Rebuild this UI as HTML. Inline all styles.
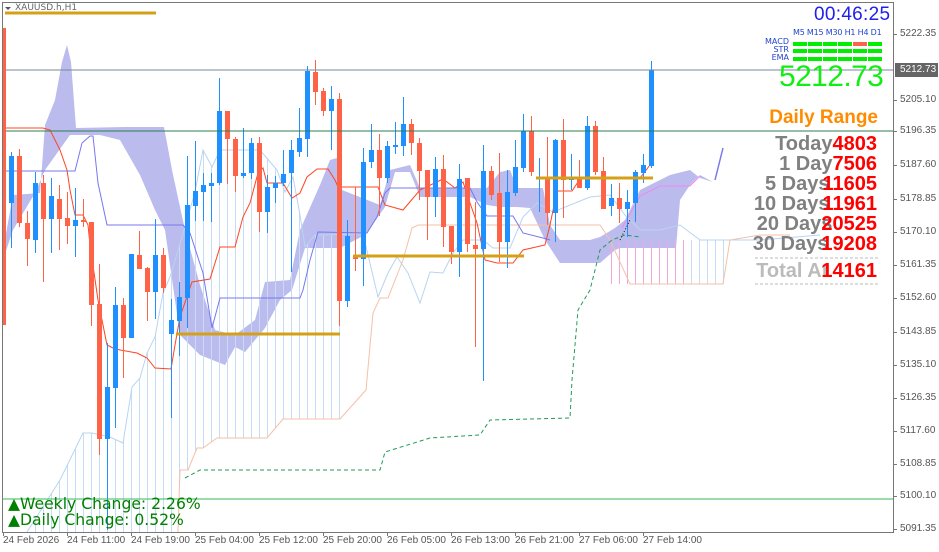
<!DOCTYPE html>
<html><head><meta charset="utf-8"><style>
html,body{margin:0;padding:0;background:#fff;}
#w{position:relative;width:939px;height:552px;overflow:hidden;background:#fff;font-family:"Liberation Sans",sans-serif;}
svg{position:absolute;left:0;top:0;}
.t{position:absolute;white-space:nowrap;}
.pl{position:absolute;left:900px;font-size:10px;color:#555;font-family:"Liberation Sans",sans-serif;letter-spacing:0px;}
.tl{position:absolute;top:535px;font-size:10px;color:#555;font-family:"Liberation Sans",sans-serif;letter-spacing:0px;}
.rw{position:absolute;right:62px;font-size:20px;font-weight:bold;white-space:nowrap;line-height:20px;}
.rw .g{color:#808080;} .rw .r{color:#ff0000;}
</style></head><body><div id="w">
<svg id="s" width="939" height="552" xmlns="http://www.w3.org/2000/svg">
<polygon fill="#bbbbee" points="3,250 13,195 40,193 45,125 55,100 62,62 67,45 71,62 76,128 125,127 164,127 172,170 185,230 200,285 215,330 235,335 255,320 265,282 290,280 300,230 320,185 330,160 337,158 342,190 380,205 390,170 410,165 420,188 487,188 500,172 510,170 517,188 543,188 550,225 560,240 590,240 600,237 615,228 625,220 640,190 670,175 690,170 700,178 713,182 700,175 690,185 680,200 676,248 620,248 615,250 600,263 560,263 545,240 530,208 517,207 500,207 487,205 470,197 420,197 410,172 395,172 385,207 365,235 340,248 305,248 292,290 280,300 265,328 255,340 245,352 235,347 225,365 200,355 180,335 165,230 155,210 140,175 120,140 100,135 70,135 45,170 35,193 13,230 3,260"/>
<g id="hatch" stroke="#c4dcf4" stroke-width="1"></g>
<polyline fill="none" stroke="#b8d4f0" stroke-width="1" points="27,532 60,480 83,433 92,433 110,437 123,443 132,387 140,378 147,353 155,337 163,293 170,277 187,220 195,192 203,150 212,167 220,150 260,150 277,170 285,192 293,177 300,215 305,247 315,235 363,234 378,297 388,273 397,257 408,273 420,303 430,272 443,273 453,253 463,240 483,240 493,248 510,248 523,217 537,203 553,212 590,197 610,195 625,215 640,230 660,230 680,225 700,240 760,240 820,235"/>
<polyline fill="none" stroke="#f4c0a8" stroke-width="1" points="178,532 180,470 188,470 197,448 203,448 217,438 267,438 283,419 340,419 366,390 373,313 380,298 388,298 403,260 412,228 418,225 600,225 610,240 630,284 723,284 730,240 760,235 790,235"/>
<polyline fill="none" stroke="#ff4422" stroke-width="1" points="3,128 43,128 50,130 60,150 67,170 70,190 75,215 83,215 88,225 90,245 98,300 107,345 113,348 120,350 137,353 147,358 155,368 171,369 175,345 180,317 192,282 210,279 220,247 235,247 243,217 250,203 258,173 263,168 267,183 283,183 292,198 300,193 307,177 317,169 328,169 335,180 338,187 378,187 385,205 403,210 420,190 443,179 455,188 463,182 470,203 477,223 485,260 497,263 513,263 523,250 545,245 550,225 557,191 572,191 580,179 590,178 640,178 650,165"/>
<polyline fill="none" stroke="#7777ee" stroke-width="1" points="3,171 75,171 82,143 90,136 93,136 98,183 107,225 183,225 190,233 203,273 212,328 220,298 300,298 303,290 310,260 318,232 367,233 377,217 385,193 390,188 470,188 477,202 487,216 513,216 523,233 543,238 550,240"/>
<polyline fill="none" stroke="#ee88ee" stroke-width="1" points="622,228 640,196 660,186 690,186 700,176"/>
<polyline fill="none" stroke="#22995a" stroke-width="1" stroke-dasharray="4,3" points="185,478 200,470 380,470 385,452 430,438 480,435 490,420 570,418 572,380 578,310 590,290 600,250 612,240 625,235 640,237"/>
<g id="c"></g>
<line x1="3" y1="70" x2="893" y2="70" stroke="#778899" stroke-width="1"/>
<line x1="3" y1="131" x2="893" y2="131" stroke="#2e7d50" stroke-width="1"/>
<line x1="3" y1="499" x2="893" y2="499" stroke="#33bb55" stroke-width="1"/>
<rect x="3" y="28" width="3" height="297" fill="#ff6347"/>
<g stroke="#d4a017" stroke-width="3">
<line x1="5" y1="13" x2="156" y2="13"/>
<line x1="176" y1="334" x2="340" y2="334"/>
<line x1="353" y1="256" x2="524" y2="256"/>
<line x1="536" y1="178" x2="653" y2="178"/>
</g>
<line x1="620" y1="240" x2="630" y2="220" stroke="#111" stroke-dasharray="1,2"/>
<line x1="715" y1="180" x2="723" y2="148" stroke="#7777ee" stroke-width="1.5"/>
<rect x="2.5" y="2.5" width="891" height="530" fill="none" stroke="#777" stroke-width="1"/>
<g id="ticks" stroke="#777"></g>
<rect x="895" y="63" width="43" height="14" fill="#666"/>
<line x1="755" y1="258" x2="878" y2="258" stroke="#bbb" stroke-dasharray="3,2"/>
<line x1="755" y1="284" x2="878" y2="284" stroke="#bbb" stroke-dasharray="3,2"/>
<path d="M5 7 L11 7 L8 10 Z" fill="#555"/>
</svg>
<div class="t" style="left:15px;top:3px;font-size:9px;color:#666;font-family:'DejaVu Sans',sans-serif;">XAUUSD.h,H1</div>
<div class="t" style="left:814px;top:4px;font-size:19px;color:#2020ee;font-family:'Liberation Sans',sans-serif;letter-spacing:0.3px;">00:46:25</div>
<div class="t" style="left:793px;top:28px;font-size:8px;color:#2244cc;font-family:'DejaVu Sans',sans-serif;letter-spacing:-0.2px;">M5 M15 M30 H1 H4 D1</div>
<div class="t" style="right:150px;top:38px;font-size:8px;line-height:8px;color:#2244cc;text-align:right;font-family:'DejaVu Sans',sans-serif;">MACD<br>STR<br>EMA</div>
<div id="bars"></div>
<div class="t" style="left:779px;top:60px;font-size:30px;color:#11ee11;font-family:'Liberation Sans',sans-serif;letter-spacing:-0.6px;">5212.73</div>
<div class="t" style="right:61px;top:107px;font-size:19px;font-weight:bold;color:#ff8c00;">Daily Range</div>
<div class="rw" style="top:134px;"><span class="g">Today</span><span class="r">4803</span></div>
<div class="rw" style="top:154px;"><span class="g">1 Day</span><span class="r">7506</span></div>
<div class="rw" style="top:174px;"><span class="g">5 Days</span><span class="r" style="margin-left:-7px">11605</span></div>
<div class="rw" style="top:194px;"><span class="g">10 Days</span><span class="r" style="margin-left:-7px">11961</span></div>
<div class="rw" style="top:214px;"><span class="g">20 Days</span><span class="r" style="margin-left:-11px">20525</span></div>
<div class="rw" style="top:234px;"><span class="g">30 Days</span><span class="r" style="margin-left:-7px">19208</span></div>
<div class="rw" style="top:261px;"><span class="g" style="color:#bbb">Total At</span><span class="r" style="margin-left:-7px">14161</span></div>
<div class="t" style="left:8px;top:496px;font-size:15.6px;line-height:16px;color:#008000;font-family:'DejaVu Sans',sans-serif;">▲Weekly Change: 2.26%<br>▲Daily Change: 0.52%</div>
<div class="pl" style="top:28px">5222.35</div>
<div class="pl" style="top:64px;color:#fff">5212.73</div>
<div class="pl" style="top:94px">5205.10</div>
<div class="pl" style="top:125px">5196.35</div>
<div class="pl" style="top:159px">5187.60</div>
<div class="pl" style="top:193px">5178.85</div>
<div class="pl" style="top:226px">5170.10</div>
<div class="pl" style="top:259px">5161.35</div>
<div class="pl" style="top:292px">5152.60</div>
<div class="pl" style="top:326px">5143.85</div>
<div class="pl" style="top:359px">5135.10</div>
<div class="pl" style="top:392px">5126.35</div>
<div class="pl" style="top:425px">5117.60</div>
<div class="pl" style="top:458px">5108.85</div>
<div class="pl" style="top:490px">5100.10</div>
<div class="pl" style="top:523px">5091.35</div>
<div class="tl" style="left:3px">24 Feb 2026</div>
<div class="tl" style="left:67px">24 Feb 11:00</div>
<div class="tl" style="left:131px">24 Feb 19:00</div>
<div class="tl" style="left:195px">25 Feb 04:00</div>
<div class="tl" style="left:259px">25 Feb 12:00</div>
<div class="tl" style="left:323px">25 Feb 20:00</div>
<div class="tl" style="left:387px">26 Feb 05:00</div>
<div class="tl" style="left:451px">26 Feb 13:00</div>
<div class="tl" style="left:515px">26 Feb 21:00</div>
<div class="tl" style="left:579px">27 Feb 06:00</div>
<div class="tl" style="left:643px">27 Feb 14:00</div>
</div>
<script>
var NS="http://www.w3.org/2000/svg";
function el(p,n,a){var e=document.createElementNS(NS,n);for(var k in a)e.setAttribute(k,a[k]);p.appendChild(e);return e;}
var D=[
[11.5,'b',156,203,152,248],[19.5,'r',156,223,149,227],[27.5,'r',223,239,211,266],[35.5,'b',183,240,172,253],
[43.5,'r',183,219,175,282],[51.5,'b',196,219,178,253],[59.5,'r',199,219,185,250],[67.5,'r',218,226,192,244],
[75.5,'b',220,226,188,257],[83.5,'r',220,222,199,227],[91.5,'r',222,305,222,326],[99.5,'r',304,439,264,455],
[107.5,'b',387,439,343,530],[115.5,'b',305,388,287,428],[123.5,'r',305,338,298,378],[131.5,'b',254,338,254,338],
[139.5,'r',255,269,231,269],[147.5,'r',268,292,267,321],[155.5,'b',255,292,219,319],[163.5,'r',255,288,248,293],
[171.5,'b',320,334,299,418],[179.5,'b',297,321,282,356],[187.5,'b',205,298,156,328],[195.5,'b',191,206,141,221],
[203.5,'b',185,192,173,221],[211.5,'b',183,186,173,222],[219.5,'b',111,183,78,185],[227.5,'r',111,139,111,184],
[235.5,'r',139,176,137,192],[243.5,'b',173,176,128,178],[251.5,'b',143,173,138,179],[259.5,'r',143,212,137,232],
[267.5,'b',187,212,175,233],[275.5,'b',183,188,176,203],[283.5,'b',174,183,150,186],[291.5,'b',150,173,140,272],
[299.5,'b',138,152,108,157],[307.5,'b',71,139,66,157],[315.5,'r',72,92,60,105],[323.5,'r',91,111,88,116],
[331.5,'b',99,111,86,150],[339.5,'r',99,301,93,326],[347.5,'b',236,301,220,307],[355.5,'r',255,259,187,271],
[363.5,'b',162,259,148,286],[371.5,'b',150,162,124,168],[379.5,'r',150,178,134,216],[387.5,'b',146,178,141,183],
[395.5,'b',145,146,122,154],[403.5,'b',124,146,97,156],[411.5,'r',124,143,119,155],[419.5,'r',143,171,138,200],
[427.5,'r',170,197,170,240],[435.5,'b',169,197,157,217],[443.5,'r',169,227,155,247],[451.5,'r',226,252,226,264],
[459.5,'b',179,252,164,277],[467.5,'r',178,244,178,252],[475.5,'r',245,249,202,347],[483.5,'b',171,249,145,381],
[491.5,'r',171,195,166,200],[499.5,'r',193,242,153,262],[507.5,'b',192,242,170,268],[515.5,'b',167,193,140,196],
[523.5,'b',131,168,114,172],[531.5,'r',131,172,116,176],[539.5,'b',177,178,158,212],[547.5,'r',177,213,137,225],
[555.5,'b',140,213,139,242],[563.5,'r',140,180,119,218],[571.5,'b',177,180,154,190],[579.5,'r',178,188,160,188],
[587.5,'b',126,188,116,190],[595.5,'r',126,172,121,175],[603.5,'r',171,209,157,209],[611.5,'b',198,206,184,216],
[619.5,'r',198,209,183,223],[627.5,'b',202,209,190,237],[635.5,'b',172,203,170,222],[643.5,'b',165,173,154,183],
[651.5,'b',70,166,61,168]];
var g=document.getElementById('c');
D.forEach(function(d){var c=d[1]=='b'?'#1e90ff':'#ff6347';
el(g,'rect',{x:d[0]-0.5,y:d[4],width:1,height:d[5]-d[4],fill:c});
el(g,'rect',{x:d[0]-2.5,y:d[2],width:5,height:Math.max(2,d[3]-d[2]),fill:c});});
var h=document.getElementById('hatch');
function interp(pts,x){for(var i=0;i<pts.length-1;i++){if(x>=pts[i][0]&&x<=pts[i+1][0]){var t=(x-pts[i][0])/((pts[i+1][0]-pts[i][0])||1);return pts[i][1]+t*(pts[i+1][1]-pts[i][1]);}}return null;}
var top1=[[27,532],[60,480],[83,433],[92,433],[110,437],[123,443],[132,387],[140,378],[147,353],[155,337],[163,293],[170,277],[187,220],[195,192],[203,150],[212,167],[220,150],[260,150],[277,170],[285,192],[293,177],[300,215],[305,247],[315,235],[340,234]];
var bot1=[[27,532],[178,532],[180,470],[188,470],[197,448],[203,448],[217,438],[267,438],[283,419],[340,419]];
for(var x=27.5;x<=340;x+=8){var a=interp(top1,x),b=interp(bot1,x);if(a!=null&&b!=null&&b>a)el(h,'line',{x1:x,y1:a,x2:x,y2:b});}
for(var x=611.5;x<=725;x+=8){el(h,'line',{x1:x,y1:240,x2:x,y2:284,stroke:x<690?'#f0a8e0':'#c4dcf4'});}
var tk=document.getElementById('ticks');
[34,100,131,165,199,232,265,298,332,365,398,431,464,496,529].forEach(function(y){el(tk,'line',{x1:893,y1:y+0.5,x2:897,y2:y+0.5});});
[3,67,131,195,259,323,387,451,515,579,643].forEach(function(x){el(tk,'line',{x1:x+0.5,y1:532,x2:x+0.5,y2:536});});
var bb=document.getElementById('bars');var cols=[793,808,823,838,853,868],rows=[42,49,57];
rows.forEach(function(y,ri){cols.forEach(function(x,ci){var d=document.createElement('div');d.style.cssText='position:absolute;left:'+x+'px;top:'+y+'px;width:14px;height:4px;background:'+((ri==0&&ci==4)?'#ff6347':'#00ee00');bb.appendChild(d);});});
</script>
</body></html>
